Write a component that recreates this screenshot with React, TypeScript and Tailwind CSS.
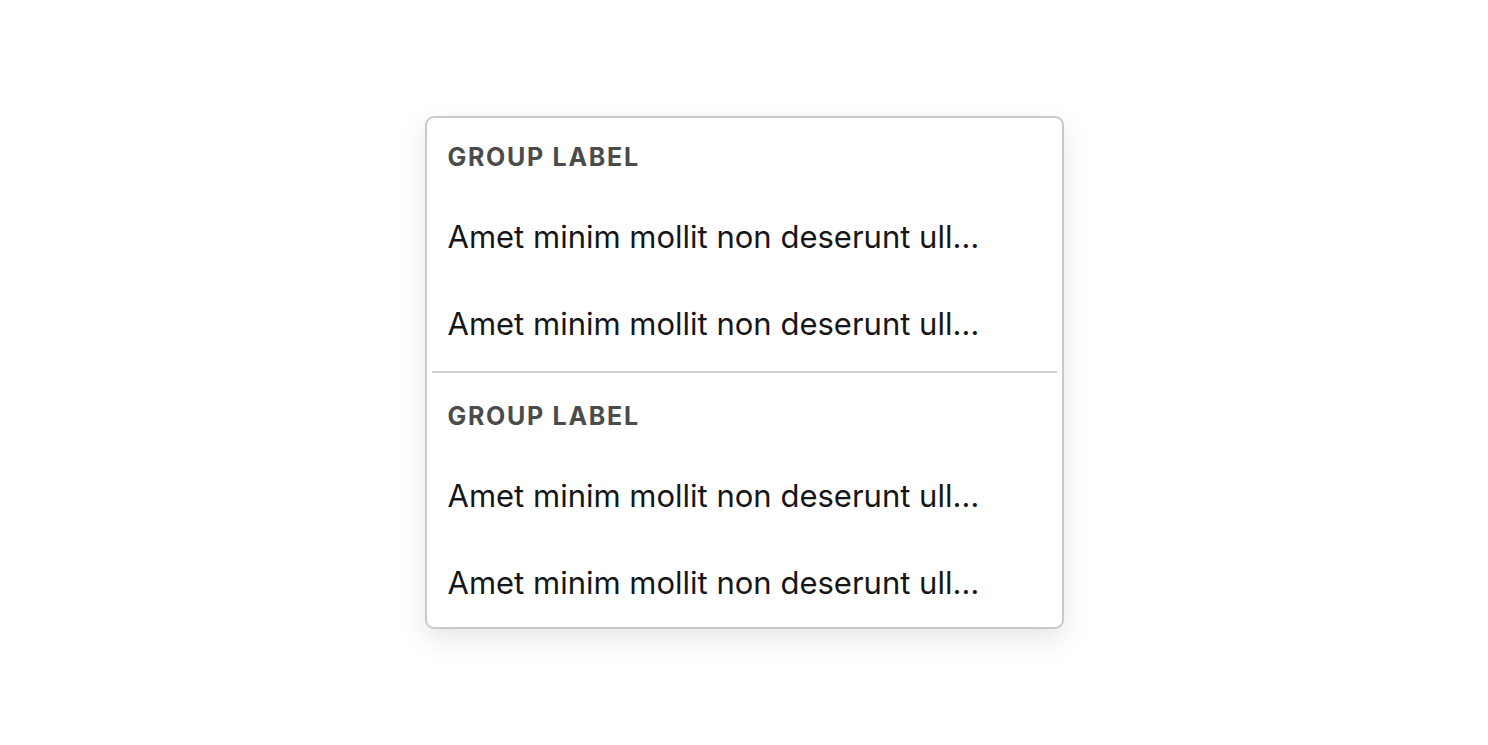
export default function App() {
  const groups = [
    {
      label: "GROUP LABEL",
      items: ["Amet minim mollit non deserunt ull…", "Amet minim mollit non deserunt ull…"],
    },
    {
      label: "GROUP LABEL",
      items: ["Amet minim mollit non deserunt ull…", "Amet minim mollit non deserunt ull…"],
    },
  ];

  return (
    <div
      className="w-full h-screen flex items-center justify-center bg-white"
      style={{ fontFamily: 'Inter, "Noto Sans", sans-serif' }}
    >
      <div className="w-[639px] bg-white border-2 border-[#cacaca] rounded-[9px] shadow-[0_10px_28px_rgba(0,0,0,0.10)] flex flex-col">
        {groups.map((g, gi) => (
          <div key={gi} className="flex flex-col">
            {gi > 0 && (
              <div className="pt-[3px] pb-[4px] px-[5px]">
                <div className="h-[2px] bg-[#cfcfcf]" />
              </div>
            )}
            <div className="h-[76px] flex items-center pt-[3px] px-[21px] text-[25px] font-bold tracking-[1.7px] text-[#4b4b4b]">
              {g.label}
            </div>
            {g.items.map((it, ii) => (
              <div
                key={ii}
                className="h-[87px] flex items-center px-[21px] text-[31px] text-[#161616]"
              >
                <span className="truncate">{it}</span>
              </div>
            ))}
          </div>
        ))}
      </div>
    </div>
  );
}
